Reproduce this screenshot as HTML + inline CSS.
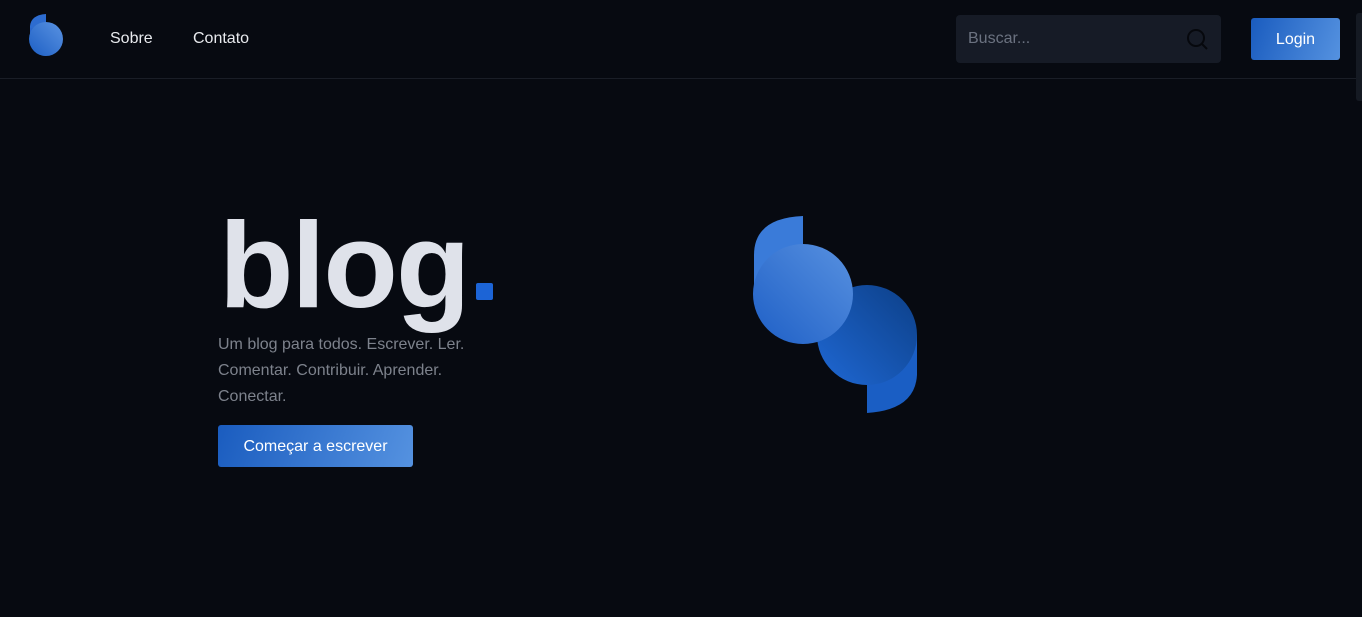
<!DOCTYPE html>
<html><head><meta charset="utf-8"><style>
*{margin:0;padding:0;box-sizing:border-box}
body{width:1362px;height:617px;background:#070a11;font-family:"Liberation Sans",sans-serif;overflow:hidden;position:relative}
.hdr{position:absolute;left:0;top:0;width:1362px;height:79px;border-bottom:1px solid #1a1e27}
.nav{position:absolute;top:30px;color:#e8eaee;font-size:16px}
.search{position:absolute;left:956px;top:15px;width:265px;height:48px;background:#161b26;border-radius:4px}
.search span{position:absolute;left:12px;top:15px;color:#6b7280;font-size:16px}
.btn{position:absolute;background:linear-gradient(110deg,#1a5cbf,#5592e0);color:#fff;border-radius:3px;font-size:16px;text-align:center}
.sb{position:absolute;left:1356px;top:13px;width:6px;height:88px;background:#151a23;border-radius:3px 0 0 3px}
h1{position:absolute;left:219px;top:190px;font-size:122px;font-weight:bold;color:#dfe2ea;letter-spacing:-2px;line-height:150px}
.dot{position:absolute;left:476px;top:283px;width:17px;height:17px;background:#1c64d6;border-radius:2px}
p{position:absolute;left:218px;top:332px;width:270px;color:#7d828c;font-size:16px;line-height:26px}
</style></head><body>
<div class="hdr"></div>
<svg style="position:absolute;left:0;top:0" width="80" height="70">
<defs><linearGradient id="g0" x1="0" y1="1" x2="1" y2="0"><stop offset="0" stop-color="#1d5fc4"/><stop offset="1" stop-color="#5a93e2"/></linearGradient></defs>
<path d="M46 14 L46 26 L30 30 L30 26 Q31 15 46 14Z" fill="#2d6cd0"/>
<path d="M30 28 L30 40 Q31 55 46 56 L46 28Z" fill="#2a68cc"/>
<circle cx="46" cy="39" r="17" fill="url(#g0)"/>
</svg>
<div class="nav" style="left:110px">Sobre</div>
<div class="nav" style="left:193px">Contato</div>
<div class="search"><span>Buscar...</span>
<svg style="position:absolute;left:230px;top:13px" width="24" height="24"><circle cx="10" cy="10" r="8" fill="none" stroke="#06080d" stroke-width="2"/><path d="M16 16 L21 21" stroke="#06080d" stroke-width="2"/></svg></div>
<div class="btn" style="left:1251px;top:18px;width:89px;height:42px;line-height:43px">Login</div>
<div class="sb"></div>
<h1>blog</h1><div class="dot"></div>
<p>Um blog para todos. Escrever. Ler. Comentar. Contribuir. Aprender. Conectar.</p>
<div class="btn" style="left:218px;top:425px;width:195px;height:42px;line-height:43px">Começar a escrever</div>
<svg style="position:absolute;left:740px;top:200px" width="200" height="230">
<defs>
<linearGradient id="a" x1="0" y1="1" x2="1" y2="0"><stop offset="0" stop-color="#1e5fc6"/><stop offset="1" stop-color="#5891e0"/></linearGradient>
<linearGradient id="b" x1="0" y1="1" x2="1" y2="0"><stop offset="0" stop-color="#1f68d4"/><stop offset="1" stop-color="#0c3f87"/></linearGradient>
</defs>
<path d="M63 16 L63 94 L14 94 L14 55 Q14 18 63 16Z" fill="#3a7bd9"/>
<path d="M127 135 L127 213 Q175 210 177 175 L177 135Z" fill="#1a5ec4"/>
<circle cx="127" cy="135" r="50" fill="url(#b)"/>
<circle cx="63" cy="94" r="50" fill="url(#a)"/>
</svg>
</body></html>
